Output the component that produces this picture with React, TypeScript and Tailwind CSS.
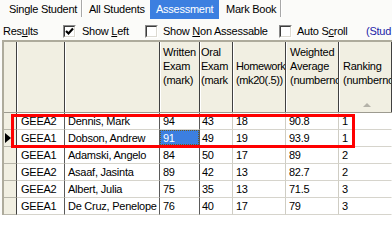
import React from "react";

const rows = [
  ["GEEA2", "Dennis, Mark", "94", "43", "18", "90.8", "1"],
  ["GEEA1", "Dobson, Andrew", "91", "49", "19", "93.9", "1"],
  ["GEEA1", "Adamski, Angelo", "84", "50", "17", "89", "2"],
  ["GEEA2", "Asaaf, Jasinta", "89", "42", "13", "82.7", "2"],
  ["GEEA2", "Albert, Julia", "75", "35", "13", "71.5", "3"],
  ["GEEA1", "De Cruz, Penelope", "76", "40", "17", "79", "3"],
];

// widths include the 1px right border
const cellCls = [
  "w-[48px] pl-[4px] border-r-[#5a5a5a]",
  "w-[95px] pl-[3px] border-r-[#5a5a5a]",
  "w-[40px] pl-[3px] border-r-[#5a5a5a]",
  "w-[33px] pl-[2px] border-r-[#cfcdc4]",
  "w-[53px] pl-[3px] border-r-[#cfcdc4]",
  "w-[53px] pl-[3px] border-r-[#cfcdc4]",
  "flex-1 pl-[3px] border-r-transparent",
];

const headCls = [
  "w-[48px]",
  "w-[95px]",
  "w-[40px] pl-[2px]",
  "w-[33px] pl-[0px]",
  "w-[53px] pl-[2px] tracking-[-0.4px]",
  "w-[53px] pl-[3px]",
  "flex-1 pl-[3px]",
];

const headText: string[][] = [
  [],
  [],
  ["Written", "Exam", "(mark)"],
  ["Oral", "Exam", "(mark"],
  ["", "Homework", "(mk20(.5))"],
  ["Weighted", "Average", "(numbernc"],
  ["", "Ranking", "(numbernc"],
];

const Check = ({ checked }: { checked?: boolean }) => (
  <div className="w-[13px] h-[13px] shrink-0 border border-t-[#8a8a8a] border-l-[#8a8a8a] border-b-white border-r-white">
    <div className="w-full h-full bg-white border border-t-[#3c3c3c] border-l-[#3c3c3c] border-b-[#dcdad2] border-r-[#dcdad2] flex items-center justify-center">
      {checked && (
        <svg width="9" height="9" viewBox="0 0 9 9">
          <path
            d="M1 4 L3.5 6.5 L8 1.5"
            stroke="#000"
            strokeWidth="2.2"
            fill="none"
          />
        </svg>
      )}
    </div>
  </div>
);

const App = () => {
  return (
    <div className="relative w-[392px] h-[215px] overflow-hidden bg-[#fbfbf9] text-black text-[11px] tracking-[-0.25px] font-['Liberation_Sans',Arial,sans-serif]">
      {/* tabs */}
      <div className="flex h-[20px] leading-[19px]">
        <div className="w-[81px] pl-[9px]">Single Student</div>
        <div className="w-[2px] h-[17px] bg-[#a8a8a8] border-r border-white" />
        <div className="w-[67px] pl-[6px]">All Students</div>
        <div className="w-[69px] h-[19px] pl-[6px] bg-[#3c7fe0] text-white">
          Assessment
        </div>
        <div className="w-[61px] pl-[7px]">Mark Book</div>
        <div className="w-[2px] h-[17px] bg-[#a8a8a8] border-r border-white" />
      </div>

      {/* options */}
      <div className="flex items-center h-[20px] pt-[2px] pl-[3px] leading-[18px]">
        <div className="w-[60px]">
          Res<u>u</u>lts
        </div>
        <div className="w-[82px] flex items-center gap-[6px]">
          <Check checked />
          <span>
            Show <u>L</u>eft
          </span>
        </div>
        <div className="w-[134px] flex items-center gap-[5px]">
          <Check />
          <span>
            Show <u>N</u>on Assessable
          </span>
        </div>
        <div className="w-[87px] flex items-center gap-[5px]">
          <Check />
          <span>
            Auto S<u>c</u>roll
          </span>
        </div>
        <span className="text-[#1c1ca8] whitespace-nowrap">(Stud</span>
      </div>

      {/* grid */}
      <div className="ml-[2px] border-t-[2px] border-l-[2px] border-[#aeab9c] bg-white">
        <div className="flex h-[71px] bg-[#f1efe2] border-b border-[#9d9b90]">
          <div className="w-[13px] border-r border-r-[#404040]" />
          {headCls.map((c, i) => (
            <div
              key={i}
              className={`${c} flex flex-col pt-[3px] leading-[14px] whitespace-nowrap overflow-hidden border-r border-r-[#404040] border-l border-l-white`}
            >
              {headText[i].map((t, j) => (
                <div key={j} className="h-[14px]">
                  {t}
                </div>
              ))}
              {i === 6 && (
                <svg
                  width="8"
                  height="5"
                  viewBox="0 0 8 5"
                  className="mt-auto mb-[5px] ml-[20px]"
                >
                  <polygon points="0,5 4,1 8,5" fill="#b4b2a8" />
                </svg>
              )}
            </div>
          ))}
        </div>

        {rows.map((r, ri) => (
          <div key={ri} className="flex h-[17px] leading-[16px]">
            <div className="w-[13px] bg-[#f1efe2] border-r border-r-[#404040] border-b border-b-[#b8b6aa] flex items-center pl-[1px]">
              {ri === 1 && (
                <svg width="6" height="10" viewBox="0 0 6 10">
                  <polygon points="0,0 6,5 0,10" fill="#000" />
                </svg>
              )}
            </div>
            {r.map((v, ci) => (
              <div
                key={ci}
                className={`${cellCls[ci]} border-r border-b border-b-[#d6d4cc] whitespace-nowrap overflow-hidden`}
              >
                {ri === 1 && ci === 2 ? (
                  <div className="-ml-[3px] pl-[2px] h-[15px] leading-[14px] bg-[#3c7fe0] text-white border border-dotted border-[#6b5a20]">
                    {v}
                  </div>
                ) : (
                  v
                )}
              </div>
            ))}
          </div>
        ))}
      </div>

      {/* red highlight annotation */}
      <div className="absolute left-[11px] top-[114px] w-[344px] h-[34px] border-[3px] border-[#ff0000]" />
    </div>
  );
};

export default App;
